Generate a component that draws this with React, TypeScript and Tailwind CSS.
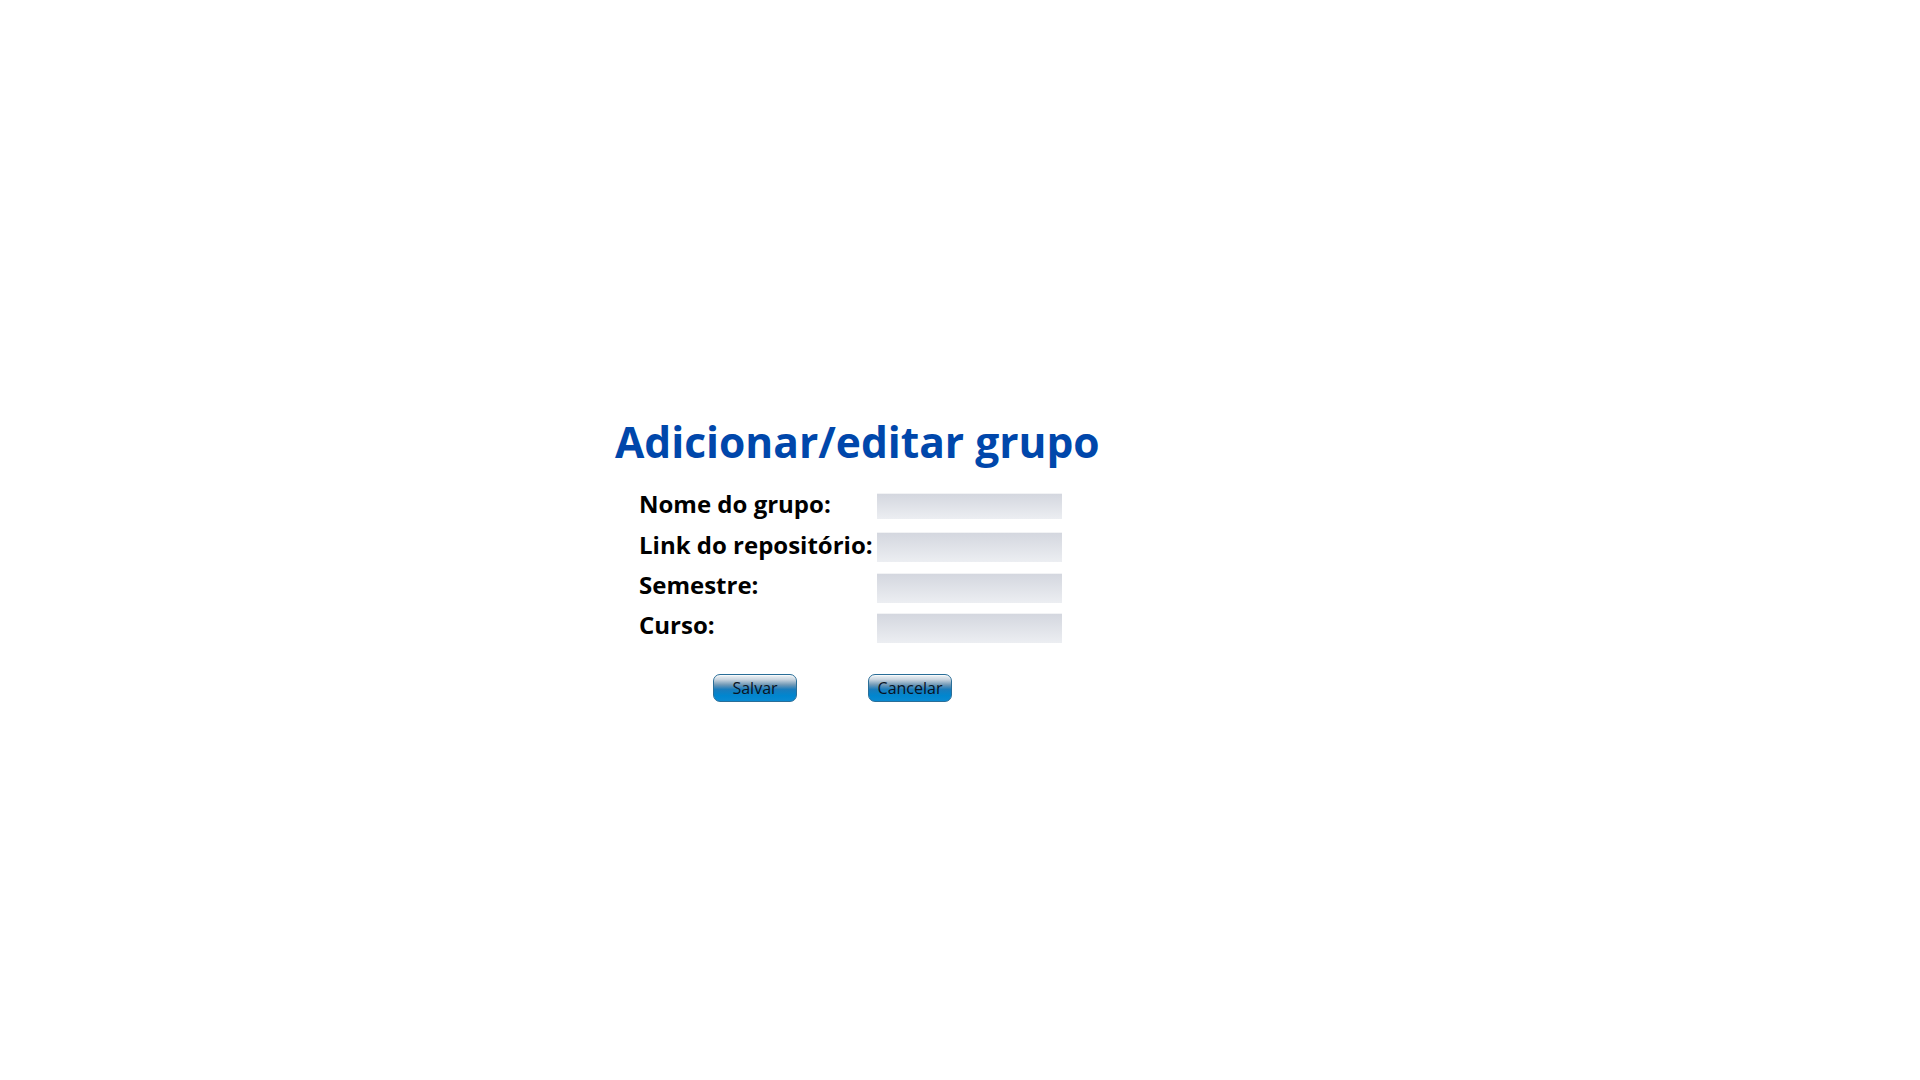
const rows = [
  { label: "Nome do grupo:", row: "h-[41px]", input: "mt-[7px] h-[26px]" },
  { label: "Link do repositório:", row: "h-[40px]", input: "mt-[5px] h-[30px]" },
  { label: "Semestre:", row: "h-[40px]", input: "mt-[6px] h-[30px]" },
  { label: "Curso:", row: "h-[40px]", input: "mt-[6px] h-[30px]" },
]

function Botao({ texto }: { texto: string }) {
  return (
    <button
      type="button"
      className="w-[84px] h-[28px] rounded-[7px] border border-[#2a6e98] bg-[linear-gradient(to_bottom,#f2f5f8_0%,#c6d3de_18%,#6f98b6_38%,#1a7cbc_55%,#0086cf_80%,#0a8ad2_100%)] text-[16px] leading-none text-[#07121f] shadow-[inset_0_1px_0_rgba(255,255,255,0.6)]"
    >
      {texto}
    </button>
  )
}

export default function App() {
  return (
    <div className="min-h-screen w-full bg-white font-['Open_Sans',sans-serif] pt-[410px] pl-[615px]">
      <h1 className="text-[42.5px] font-bold text-[#0047ab] leading-normal">Adicionar/editar grupo</h1>
      <form className="flex flex-col pl-[24px] mt-[12px]">
        {rows.map((r) => (
          <div key={r.label} className={`flex items-start ${r.row}`}>
            <label className="w-[238px] text-[24px] font-bold text-black leading-normal whitespace-nowrap">
              {r.label}
            </label>
            <input
              type="text"
              className={`w-[185px] ${r.input} border-t border-[#f2f3f5] bg-[linear-gradient(to_bottom,#d4d7df,#eceef2)] outline-none`}
            />
          </div>
        ))}
        <div className="flex gap-[71px] pl-[74px] mt-[27px]">
          <Botao texto="Salvar" />
          <Botao texto="Cancelar" />
        </div>
      </form>
    </div>
  )
}
